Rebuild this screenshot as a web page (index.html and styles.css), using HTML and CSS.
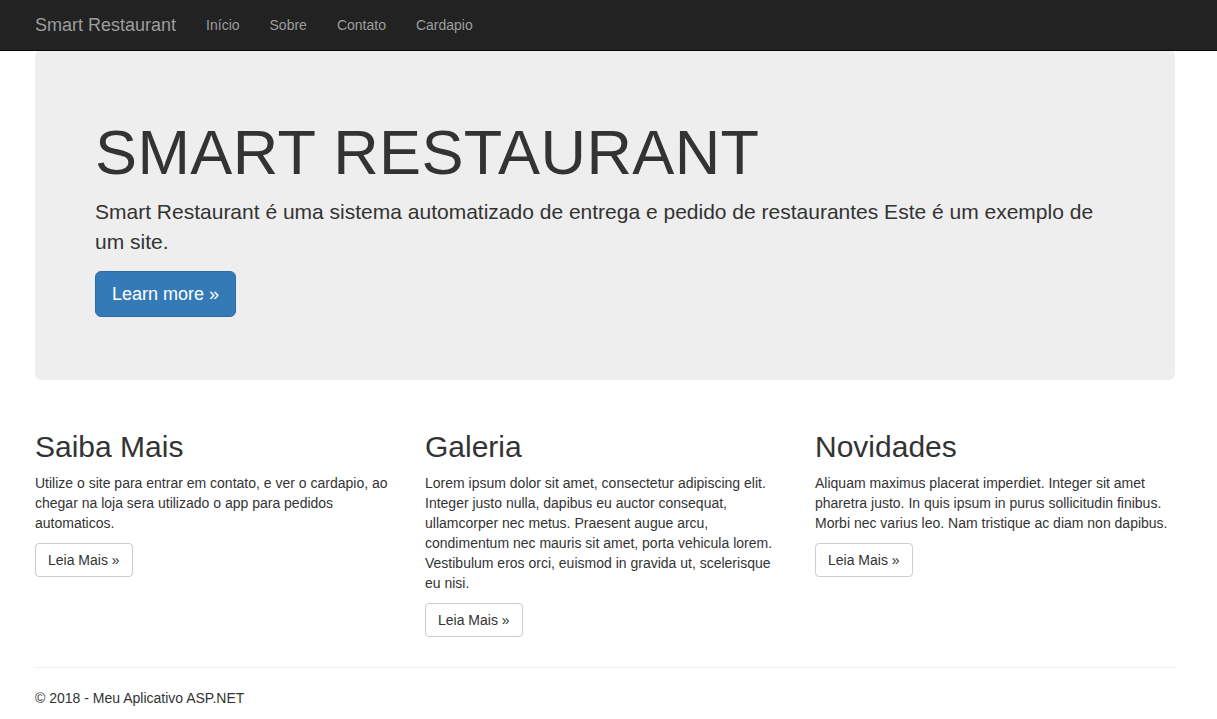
FILE: index.html
```html
<!DOCTYPE html>
<html lang="pt">
<head>
<meta charset="utf-8">
<title>Smart Restaurant</title>
<link rel="stylesheet" href="styles.css">
</head>
<body>
<nav class="navbar">
  <div class="container nav-inner">
    <a class="brand" href="#">Smart Restaurant</a>
    <ul class="nav-links">
      <li><a href="#">Início</a></li>
      <li><a href="#">Sobre</a></li>
      <li><a href="#">Contato</a></li>
      <li><a href="#">Cardapio</a></li>
    </ul>
  </div>
</nav>
<div class="container body-content">
  <div class="jumbotron">
    <h1>SMART RESTAURANT</h1>
    <p class="lead">Smart Restaurant é uma sistema automatizado de entrega e pedido de restaurantes Este é um exemplo de um site.</p>
    <p class="lead-btn"><a href="#" class="btn btn-primary">Learn more &raquo;</a></p>
  </div>
  <div class="row">
    <div class="col">
      <h2>Saiba Mais</h2>
      <p>Utilize o site para entrar em contato, e ver o cardapio, ao chegar na loja sera utilizado o app para pedidos automaticos.</p>
      <p><a class="btn btn-default" href="#">Leia Mais &raquo;</a></p>
    </div>
    <div class="col">
      <h2>Galeria</h2>
      <p>Lorem ipsum dolor sit amet, consectetur adipiscing elit. Integer justo nulla, dapibus eu auctor consequat, ullamcorper nec metus. Praesent augue arcu, condimentum nec mauris sit amet, porta vehicula lorem. Vestibulum eros orci, euismod in gravida ut, scelerisque eu nisi.</p>
      <p><a class="btn btn-default" href="#">Leia Mais &raquo;</a></p>
    </div>
    <div class="col">
      <h2>Novidades</h2>
      <p>Aliquam maximus placerat imperdiet. Integer sit amet pharetra justo. In quis ipsum in purus sollicitudin finibus. Morbi nec varius leo. Nam tristique ac diam non dapibus.</p>
      <p><a class="btn btn-default" href="#">Leia Mais &raquo;</a></p>
    </div>
  </div>
  <hr class="sep">
  <footer class="footer">
    <p>&copy; 2018 - Meu Aplicativo ASP.NET</p>
  </footer>
</div>
</body>
</html>
```
FILE: styles.css
```css
* { box-sizing: border-box; }
html, body { margin: 0; }
body {
  padding-top: 50px;
  font-family: "Liberation Sans", Arial, Helvetica, sans-serif;
  font-size: 14px;
  line-height: 1.42857143;
  color: #333;
  background: #fff;
}
a { text-decoration: none; }
.container {
  width: 1140px;
  margin-left: 35px;
}
.navbar {
  position: fixed;
  top: 0; left: 0; right: 0;
  height: 51px;
  background: #222;
  border-bottom: 1px solid #080808;
  z-index: 10;
}
.nav-inner {
  display: flex;
  align-items: flex-start;
}
.brand {
  display: block;
  height: 50px;
  padding: 15px;
  margin-left: -15px;
  font-size: 18px;
  line-height: 20px;
  color: #9d9d9d;
}
.nav-links {
  display: flex;
  list-style: none;
  margin: 0;
  padding: 0;
}
.nav-links a {
  display: block;
  padding: 15px;
  line-height: 20px;
  color: #9d9d9d;
}
.jumbotron {
  background: #eee;
  border-radius: 6px;
  padding: 48px 60px;
  margin-bottom: 30px;
}
.jumbotron h1 {
  font-size: 63px;
  font-weight: 500;
  line-height: 69px;
  letter-spacing: 0.4px;
  margin: 20px 0 10px;
  color: inherit;
}
.jumbotron p {
  font-size: 21px;
  margin: 0 0 15px;
  line-height: 30px;
}
.jumbotron .lead { margin-bottom: 14px; }
.jumbotron .lead-btn { line-height: 1; }
.btn {
  display: inline-block;
  border: 1px solid transparent;
  white-space: nowrap;
  vertical-align: middle;
}
.btn-primary {
  color: #fff;
  background: #337ab7;
  border-color: #2e6da4;
  padding: 10px 16px;
  font-size: 18px;
  line-height: 1.3333333;
  border-radius: 6px;
}
.btn-default {
  color: #333;
  background: #fff;
  border-color: #ccc;
  padding: 6px 12px;
  font-size: 14px;
  line-height: 20px;
  border-radius: 4px;
}
.row {
  display: flex;
  margin: 0 -15px;
}
.col {
  width: 390px;
  padding: 0 15px;
}
.col h2 {
  font-size: 30px;
  font-weight: 500;
  line-height: 1.1;
  margin: 20px 0 10px;
}
.col p { margin: 0 0 10px; }
.sep {
  margin: 20px 0;
  border: 0;
  border-top: 1px solid #eee;
}
.footer p { margin: 0 0 10px; }
```
